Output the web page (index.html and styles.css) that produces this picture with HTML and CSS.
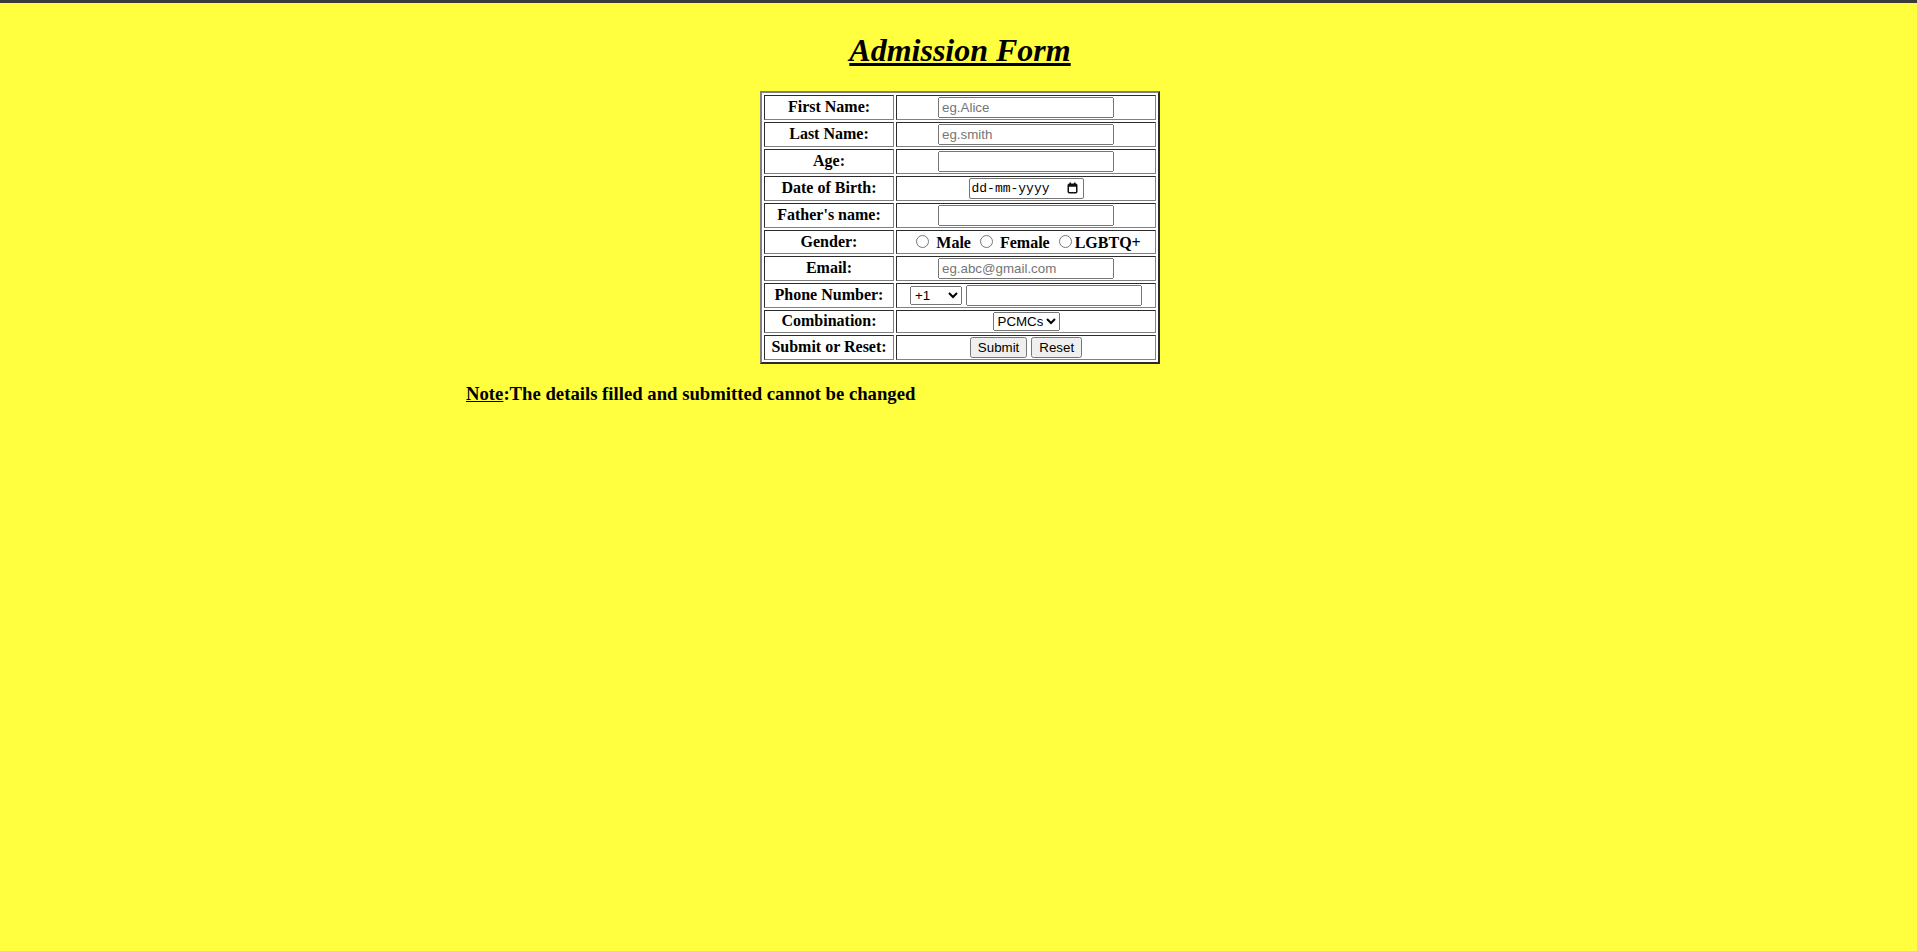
FILE: index.html
```html
<!DOCTYPE html>
<html lang="en">
<head>
<meta charset="utf-8">
<title>Admission Form</title>
<link rel="stylesheet" href="styles.css">
</head>
<body>
<h1 class="title">Admission Form</h1>
<form class="admission">
<table class="form-table">
  <tr>
    <td class="label-cell">First Name:</td>
    <td class="field-cell"><input class="text-input" type="text" placeholder="eg.Alice"></td>
  </tr>
  <tr>
    <td class="label-cell">Last Name:</td>
    <td class="field-cell"><input class="text-input" type="text" placeholder="eg.smith"></td>
  </tr>
  <tr>
    <td class="label-cell">Age:</td>
    <td class="field-cell"><input class="text-input" type="text"></td>
  </tr>
  <tr>
    <td class="label-cell">Date of Birth:</td>
    <td class="field-cell"><span class="date-field"><span class="date-text">dd-mm-yyyy</span><svg class="cal-icon" width="11" height="12" viewBox="0 0 11 12"><rect x="1.25" y="2.25" width="8.5" height="8.5" rx="1" fill="none" stroke="#111" stroke-width="1.5"/><rect x="1.25" y="2.25" width="8.5" height="2.5" fill="#111"/><rect x="2.5" y="0.5" width="1.5" height="2" fill="#111"/><rect x="7" y="0.5" width="1.5" height="2" fill="#111"/></svg></span></td>
  </tr>
  <tr>
    <td class="label-cell">Father's name:</td>
    <td class="field-cell"><input class="text-input" type="text"></td>
  </tr>
  <tr>
    <td class="label-cell">Gender:</td>
    <td class="field-cell"><input class="radio" type="radio" name="gender"> Male <input class="radio" type="radio" name="gender"> Female <input class="radio" type="radio" name="gender">LGBTQ+</td>
  </tr>
  <tr>
    <td class="label-cell">Email:</td>
    <td class="field-cell"><input class="text-input" type="text" placeholder="eg.abc@gmail.com"></td>
  </tr>
  <tr>
    <td class="label-cell">Phone Number:</td>
    <td class="field-cell"><select class="select code-select"><option>+1</option></select> <input class="text-input" type="text"></td>
  </tr>
  <tr>
    <td class="label-cell">Combination:</td>
    <td class="field-cell"><select class="select combo-select"><option>PCMCs</option></select></td>
  </tr>
  <tr>
    <td class="label-cell">Submit or Reset:</td>
    <td class="field-cell"><button class="btn" type="button">Submit</button> <button class="btn" type="button">Reset</button></td>
  </tr>
</table>
</form>
<h3 class="note"><span class="note-label">Note</span>:The details filled and submitted cannot be changed</h3>
</body>
</html>
```

FILE: styles.css
```css
html {
  border-top: 3px solid #3b3b3b;
  background: #ffff40;
}

body {
  margin: 0;
  padding: 8px 8px 8px 11px;
  font-family: "Liberation Serif", "Times New Roman", serif;
  color: #000;
}

.title {
  font-size: 32px;
  font-style: italic;
  font-weight: bold;
  text-decoration: underline;
  text-align: center;
  margin: 21.44px 0;
}

.admission {
  margin: 0;
}

.form-table {
  margin: 0 auto;
  width: 400px;
  border: 2px outset gray;
  border-spacing: 2px;
  background: #fff;
}

.form-table td {
  border: 1px inset gray;
  padding: 1px;
  text-align: center;
  vertical-align: middle;
  font-weight: bold;
  font-size: 16px;
}

.label-cell {
  width: 130px;
  box-sizing: border-box;
}

.text-input {
  width: 176px;
  height: 21px;
  box-sizing: border-box;
  font-family: "Liberation Sans", Arial, sans-serif;
  font-size: 13.333px;
  margin: 0;
}

.text-input::placeholder {
  color: #757575;
}

.date-field {
  display: inline-flex;
  align-items: center;
  justify-content: space-between;
  width: 115px;
  height: 21px;
  box-sizing: border-box;
  border: 1px solid #767676;
  border-radius: 2px;
  padding: 0 5px 0 2px;
  background: #fff;
  font-family: "Liberation Mono", "DejaVu Sans Mono", monospace;
  font-size: 13px;
  font-weight: normal;
  color: #000;
}

.cal-icon {
  display: block;
}

.radio {
  margin: 3px 3px 0 5px;
}

.select {
  height: 19px;
  font-family: "Liberation Sans", Arial, sans-serif;
  font-size: 13.333px;
  margin: 0;
}

.code-select {
  width: 52px;
}

.combo-select {
  width: 67px;
}

.btn {
  font-family: "Liberation Sans", Arial, sans-serif;
  font-size: 13.333px;
  padding: 1px 6px;
  margin: 0;
}

.note {
  margin: 18.72px 0 18.72px 455px;
  font-size: 18.72px;
  font-weight: bold;
}

.note-label {
  text-decoration: underline;
}
```
